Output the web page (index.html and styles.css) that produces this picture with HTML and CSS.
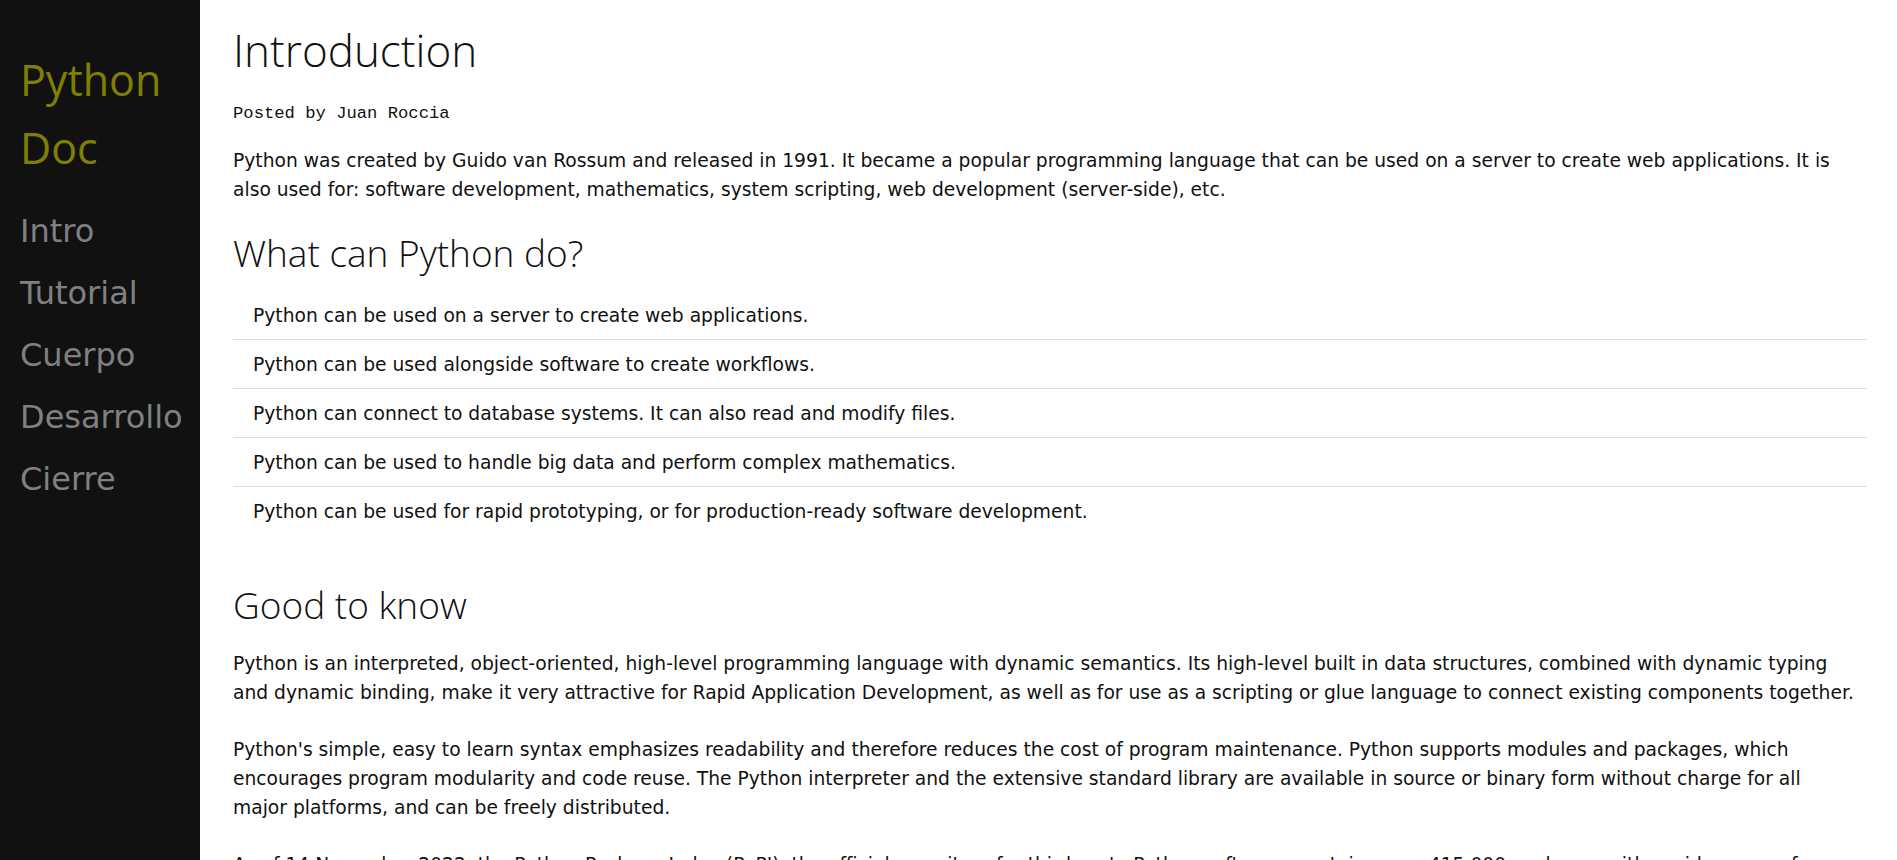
FILE: index.html
```html
<!DOCTYPE html>
<html lang="en">
<head>
<meta charset="utf-8">
<title>Python Doc</title>
<link rel="stylesheet" href="styles.css">
</head>
<body>
<div class="page">
  <nav class="sidebar">
    <header class="brand">Python Doc</header>
    <ul class="nav-list">
      <li><a class="nav-link" href="#intro">Intro</a></li>
      <li><a class="nav-link" href="#tutorial">Tutorial</a></li>
      <li><a class="nav-link" href="#cuerpo">Cuerpo</a></li>
      <li><a class="nav-link" href="#desarrollo">Desarrollo</a></li>
      <li><a class="nav-link" href="#cierre">Cierre</a></li>
    </ul>
  </nav>
  <main class="content">
    <section class="section" id="intro">
      <h1 class="title">Introduction</h1>
      <p class="byline">Posted by Juan Roccia</p>
      <p class="text">Python was created by Guido van Rossum and released in 1991. It became a popular programming language that can be used on a server to create web applications. It is also used for: software development, mathematics, system scripting, web development (server-side), etc.</p>
      <h2 class="subtitle">What can Python do?</h2>
      <ul class="list">
        <li class="list-item">Python can be used on a server to create web applications.</li>
        <li class="list-item">Python can be used alongside software to create workflows.</li>
        <li class="list-item">Python can connect to database systems. It can also read and modify files.</li>
        <li class="list-item">Python can be used to handle big data and perform complex mathematics.</li>
        <li class="list-item">Python can be used for rapid prototyping, or for production-ready software development.</li>
      </ul>
      <h2 class="subtitle subtitle-spaced">Good to know</h2>
      <p class="text text-first">Python is an interpreted, object-oriented, high-level programming language with dynamic semantics. Its high-level built in data structures, combined with dynamic typing and dynamic binding, make it very attractive for Rapid Application Development, as well as for use as a scripting or glue language to connect existing components together.</p>
      <p class="text">Python's simple, easy to learn syntax emphasizes readability and therefore reduces the cost of program maintenance. Python supports modules and packages, which encourages program modularity and code reuse. The Python interpreter and the extensive standard library are available in source or binary form without charge for all major platforms, and can be freely distributed.</p>
      <p class="text">As of 14 November 2022, the Python Package Index (PyPI), the official repository for third-party Python software, contains over 415,000 packages with a wide range of functionality, including automation, data analytics, databases, documentation, graphical user interfaces, image processing, machine learning, mobile apps, multimedia, computer networking, scientific computing, system administration, test frameworks, text processing, web frameworks and web scraping.</p>
    </section>
  </main>
</div>
</body>
</html>
```
FILE: styles.css
```css
* { box-sizing: border-box; }
html, body { margin: 0; padding: 0; }
body {
  background: #fff;
  color: #111;
  font-family: "DejaVu Sans", Verdana, sans-serif;
}
.page {
  display: flex;
  align-items: stretch;
  min-height: 100vh;
}
.sidebar {
  flex: 0 0 200px;
  width: 200px;
  background: #111111;
  padding: 46px 0 0 20px;
}
.brand {
  color: #808000;
  font-family: "Open Sans", sans-serif;
  font-size: 43px;
  line-height: 68px;
}
.nav-list {
  list-style: none;
  margin: 18px 0 0;
  padding: 0;
  display: flex;
  flex-direction: column;
}
.nav-link {
  display: block;
  color: #808080;
  text-decoration: none;
  font-family: "DejaVu Sans", Verdana, sans-serif;
  font-size: 32px;
  line-height: 62px;
}
.content {
  flex: 1;
  padding: 0 30px 0 33px;
}
.title {
  font-family: "Open Sans", sans-serif;
  font-weight: 300;
  font-size: 44px;
  line-height: 56px;
  margin: 22px 0 0;
}
.byline {
  font-family: "Liberation Mono", monospace;
  font-size: 17.2px;
  line-height: 28px;
  margin: 22px 0 0;
}
.text {
  font-size: 18.7px;
  line-height: 29px;
  margin: 28px 0 0;
  padding-right: 10px;
}
.byline + .text { margin-top: 18px; }
.subtitle {
  font-family: "Open Sans", sans-serif;
  font-weight: 300;
  font-size: 37px;
  line-height: 44px;
  margin: 27px 0 0;
}
.subtitle-spaced { margin-top: 48px; }
.text-first { margin-top: 22px; }
.list {
  list-style: none;
  margin: 16px 0 0;
  padding: 0;
}
.list-item {
  font-size: 18.7px;
  line-height: 29px;
  padding: 10px 20px 9px;
  border-bottom: 1px solid #dddddd;
}
.list-item:last-child { border-bottom: none; }
```
